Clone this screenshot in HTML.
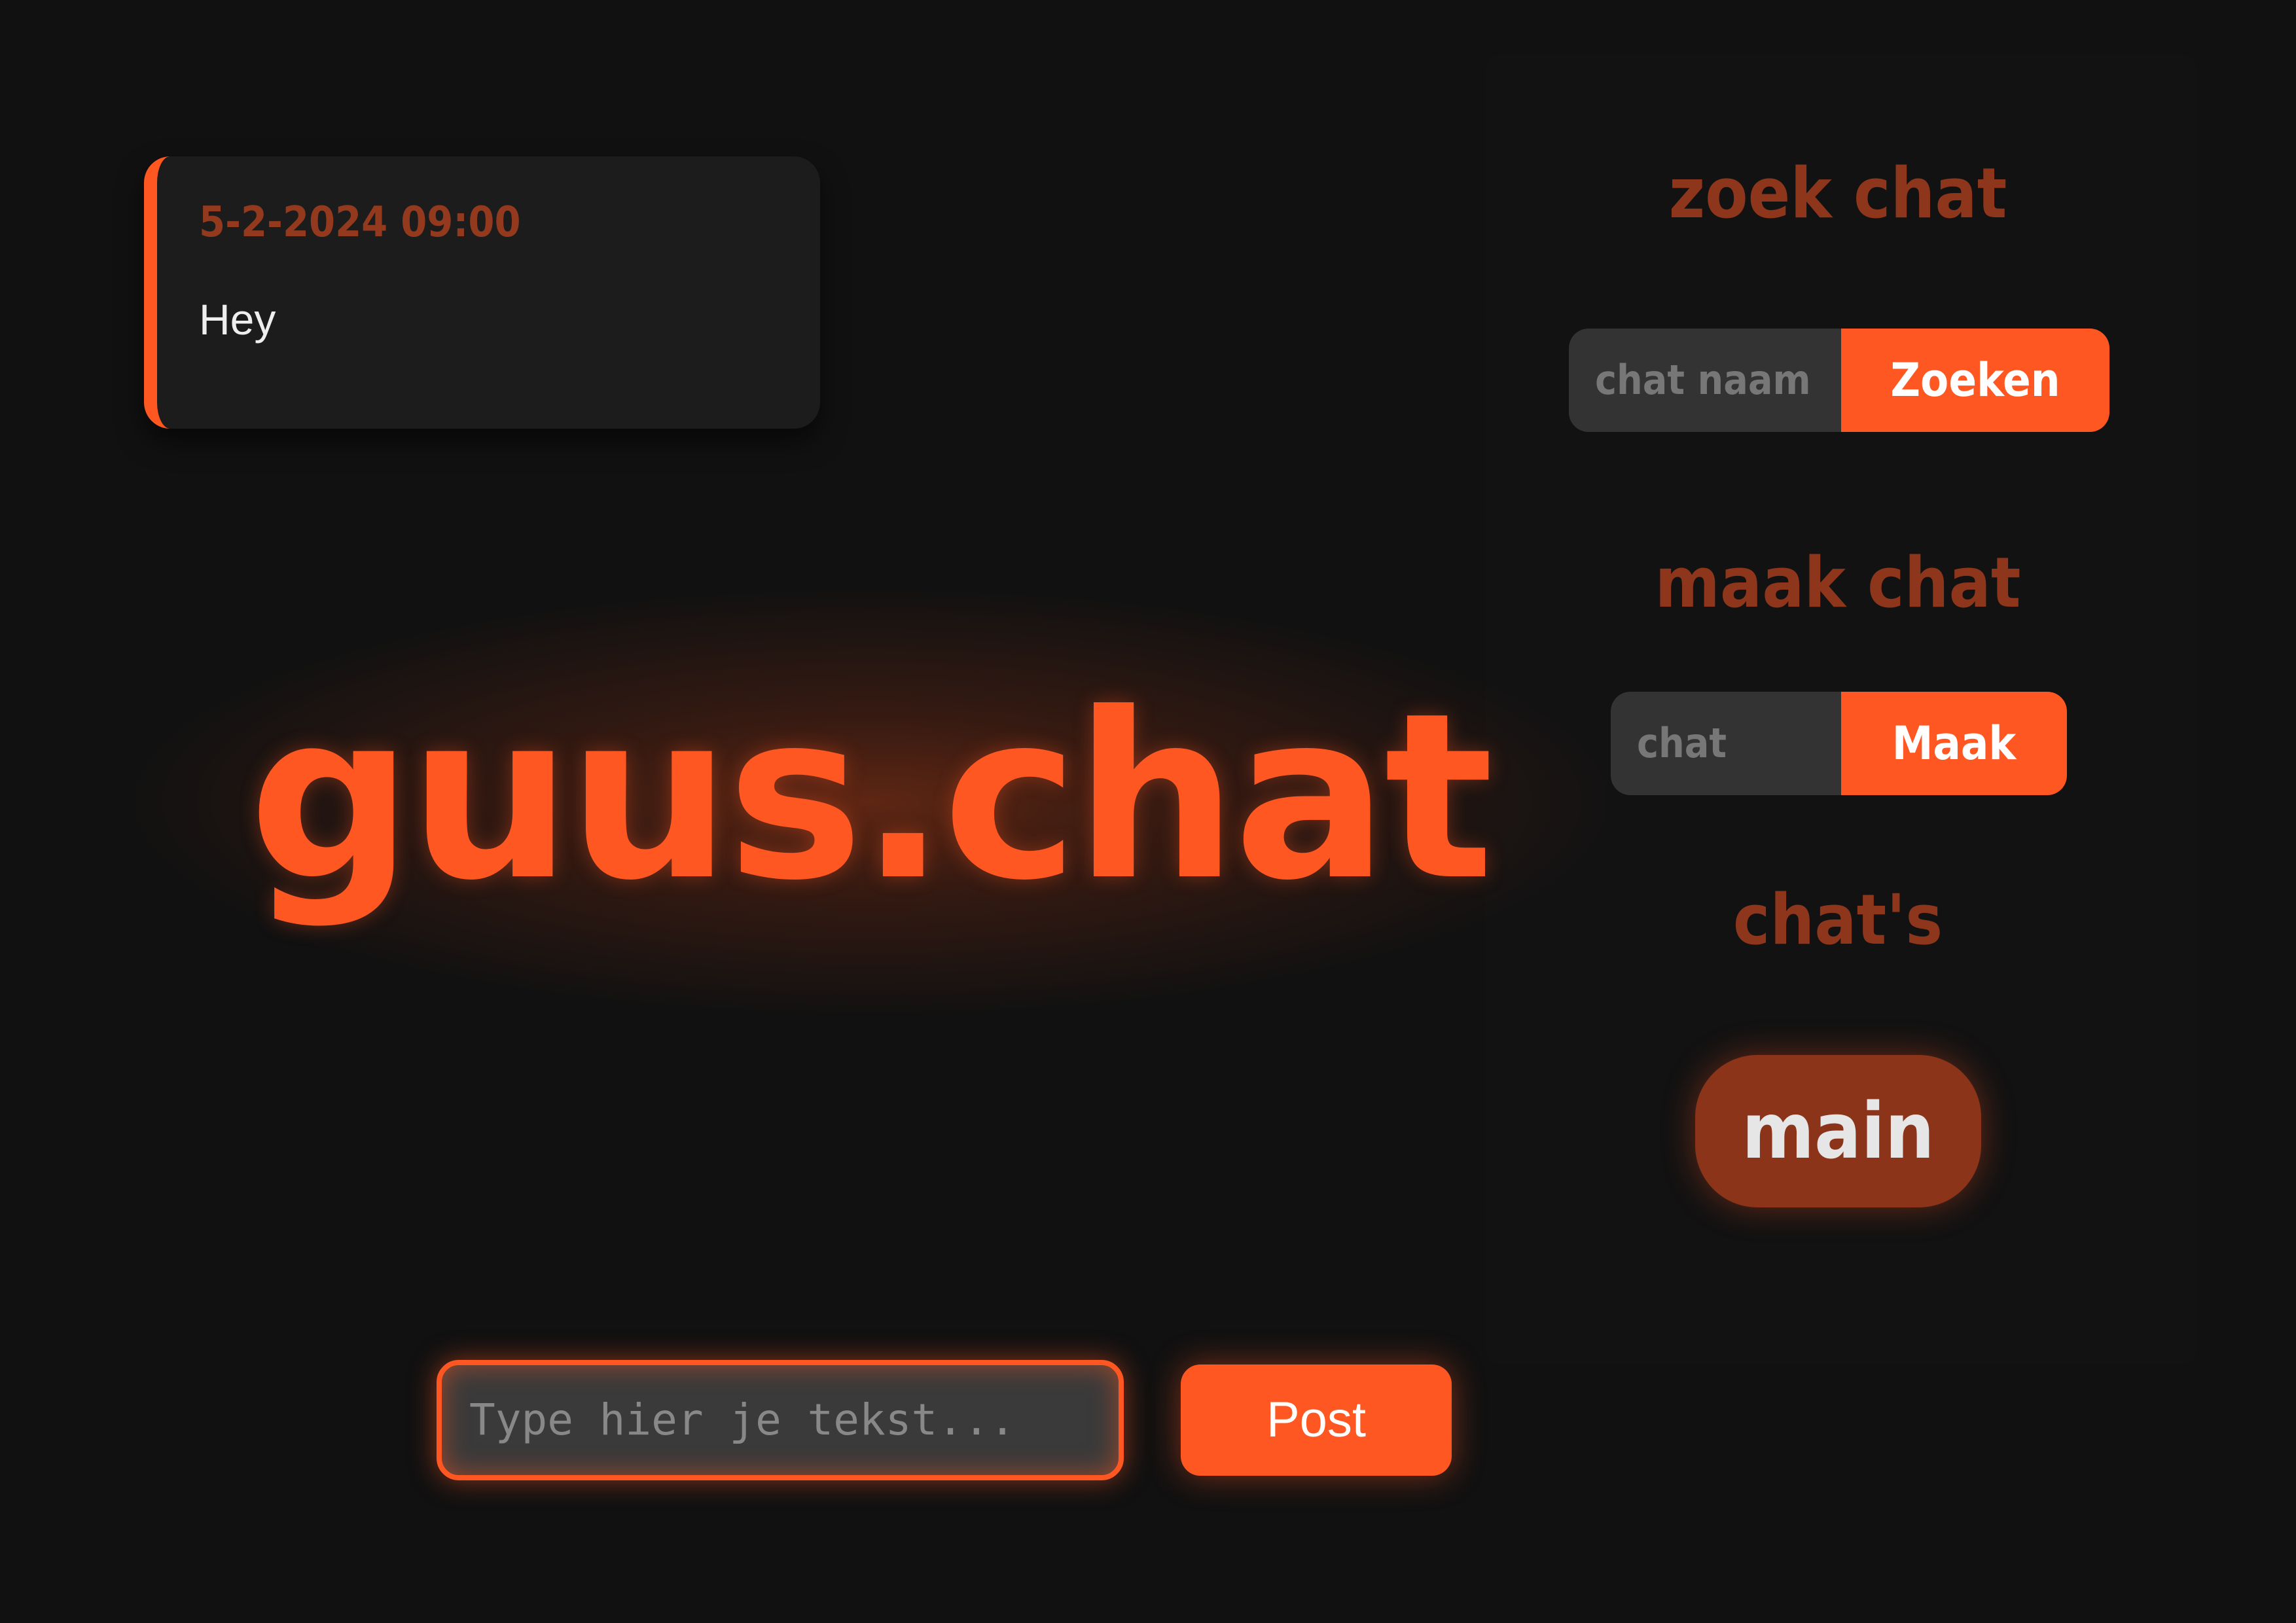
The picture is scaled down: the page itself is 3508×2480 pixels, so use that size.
<!DOCTYPE html>
<html><head><meta charset="utf-8"><style>
*{margin:0;padding:0;box-sizing:border-box}
html,body{width:3508px;height:2480px;background:#111;overflow:hidden}
body{position:relative;font-family:"DejaVu Sans",sans-serif}
.abs{position:absolute}
.cond{font-family:"DejaVu Sans Condensed","DejaVu Sans",sans-serif;font-stretch:condensed;font-weight:bold}
.panel{left:2270px;top:84px;width:1086px;height:2000px;background:#121212;border-radius:20px}
.card{left:220px;top:239px;width:1033px;height:416px;background:#1c1c1c;border-left:20px solid #ff5722;border-radius:40px;box-shadow:0 20px 40px rgba(0,0,0,.55)}
.date{left:304px;top:300px;font-size:64px;color:#933a1e;line-height:80px;white-space:nowrap}
.hey{left:304px;top:448px;font-family:"Liberation Sans",sans-serif;font-size:66px;color:#eee;line-height:80px}
.glow{left:0px;top:800px;width:2700px;height:850px;background:radial-gradient(ellipse 1150px 330px at 1330px 425px,rgba(120,45,20,.75) 0%,rgba(90,35,18,.5) 40%,rgba(17,17,17,0) 100%)}
.title{left:380px;top:1008px;font-family:"DejaVu Sans",sans-serif;font-weight:bold;font-size:350px;letter-spacing:-6px;color:#ff5722;line-height:420px;white-space:nowrap;text-shadow:0 0 30px rgba(255,87,34,.35)}
.h{width:1200px;left:2208px;text-align:center;color:#8e361c;font-size:106px;line-height:120px}
.grp{height:158px;border-radius:30px;overflow:hidden;display:flex}
.grp .in{background:#333;color:#777;font-size:62px;line-height:158px;padding-left:40px;white-space:nowrap;overflow:hidden}
.grp .bt{background:#ff5722;color:#fff;font-size:70px;line-height:158px;text-align:center}
.pill{left:2590px;top:1612px;width:437px;height:233px;border-radius:95px;background:#8b3419;color:#e6e6e6;font-size:118px;text-align:center;line-height:233px;box-shadow:0 0 50px rgba(255,87,34,.35)}
.inp{left:667px;top:2078px;width:1050px;height:184px;border:8px solid #ff5722;border-radius:34px;background:#3a3a3a;box-shadow:0 0 40px rgba(255,87,34,.5),inset 0 0 40px rgba(255,87,34,.5)}
.ph{left:717px;top:2130px;font-family:"DejaVu Sans Mono","Liberation Mono",monospace;font-size:66px;color:#888;line-height:80px;white-space:nowrap}
.post{left:1804px;top:2085px;width:414px;height:170px;border-radius:30px;background:#ff5722;color:#fff;font-family:"Liberation Sans",sans-serif;font-size:76px;text-align:center;line-height:170px;box-shadow:0 0 50px rgba(255,87,34,.45)}
</style></head><body>
<div class="abs panel"></div>
<div class="abs card"></div>
<div class="abs date cond">5-2-2024 09:00</div>
<div class="abs hey">Hey</div>
<div class="abs glow"></div>
<div class="abs title">guus.chat</div>

<div class="abs h cond" style="top:236px">zoek chat</div>
<div class="abs grp cond" style="left:2397px;top:502px;width:826px">
  <div class="in" style="width:416px">chat naam</div>
  <div class="bt" style="width:410px">Zoeken</div>
</div>
<div class="abs h cond" style="top:831px">maak chat</div>
<div class="abs grp cond" style="left:2461px;top:1057px;width:697px">
  <div class="in" style="width:352px">chat</div>
  <div class="bt" style="width:345px">Maak</div>
</div>
<div class="abs h cond" style="top:1346px">chat's</div>
<div class="abs pill cond">main</div>

<div class="abs inp"></div>
<div class="abs ph">Type hier je tekst...</div>
<div class="abs post">Post</div>
</body></html>
